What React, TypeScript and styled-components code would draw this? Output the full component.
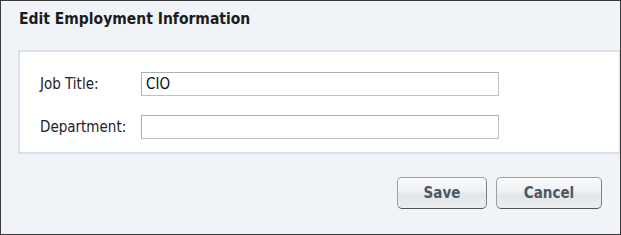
import React from "react"
import styled, { createGlobalStyle } from "styled-components"

const GlobalStyle = createGlobalStyle`
  html, body {
    margin: 0;
    padding: 0;
    background: #ffffff;
  }
  * {
    box-sizing: border-box;
  }
`

const Dialog = styled.div`
  width: 621px;
  height: 235px;
  border: 1px solid #3a3a3a;
  background: #f0f4f8;
  display: flex;
  flex-direction: column;
  font-family: "DejaVu Sans Condensed", "DejaVu Sans", sans-serif;
`

const Title = styled.div`
  height: 49px;
  padding: 9px 0 0 18px;
  font-size: 15.5px;
  font-weight: bold;
  color: #1c1c1c;
`

const FormPanel = styled.div`
  margin-left: 17px;
  height: 104px;
  background: #ffffff;
  border: 2px solid #d8e0e8;
  border-right-width: 1px;
  padding: 20px 0 0 20px;
  display: flex;
  flex-direction: column;
  gap: 19px;
`

const Row = styled.div`
  display: flex;
  align-items: center;
  height: 24px;
`

const Label = styled.label`
  width: 101px;
  font-size: 15px;
  color: #222222;
`

const TextInput = styled.input`
  width: 358px;
  height: 24px;
  border: 1px solid #b8c4cc;
  border-top-color: #a6b2ba;
  border-left-color: #a6b2ba;
  padding: 0 0 0 4px;
  font-family: inherit;
  font-size: 15px;
  color: #111111;
  outline: none;
`

const Footer = styled.div`
  display: flex;
  justify-content: flex-end;
  gap: 9px;
  padding: 23px 18px 0 0;
`

const Button = styled.button<{ $w: number }>`
  width: ${(p) => p.$w}px;
  height: 32px;
  padding: 0;
  border: 1px solid #9aa0a6;
  border-bottom-color: #4f5459;
  border-right-color: #7c8288;
  border-radius: 5px;
  background: linear-gradient(#fafbfc 0%, #eef1f3 45%, #e3e7ea 55%, #e9ecee 100%);
  box-shadow: inset 0 1px 0 #ffffff;
  font-family: inherit;
  font-size: 15px;
  font-weight: bold;
  color: #4a5866;
  cursor: pointer;
`

export default function App() {
  return (
    <>
      <GlobalStyle />
      <Dialog>
        <Title>Edit Employment Information</Title>
        <FormPanel>
          <Row>
            <Label>Job Title:</Label>
            <TextInput defaultValue="CIO" />
          </Row>
          <Row>
            <Label>Department:</Label>
            <TextInput defaultValue="" />
          </Row>
        </FormPanel>
        <Footer>
          <Button $w={90}>Save</Button>
          <Button $w={106}>Cancel</Button>
        </Footer>
      </Dialog>
    </>
  )
}
